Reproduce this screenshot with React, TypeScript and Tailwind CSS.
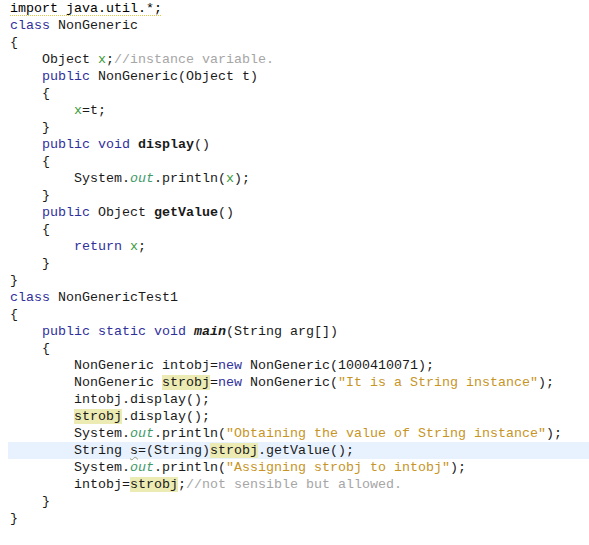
type Kind = "t" | "k" | "f" | "o" | "s" | "c" | "b" | "bi" | "h" | "w" | "u";
type Tok = [Kind, string];

const styles: Record<Kind, string> = {
  t: "text-[#1a1a1a]",
  k: "text-[#30309c]",
  f: "text-[#3a9a3a]",
  o: "text-[#3f9a6a] italic",
  s: "text-[#c79526]",
  c: "text-[#a6a6a6]",
  b: "text-[#1a1a1a] font-bold",
  bi: "text-[#1a1a1a] font-bold italic",
  h: "text-[#1a1a1a] bg-[#ecebb3]",
  w: "text-[#1a1a1a] underline decoration-wavy decoration-[#9a9a7a] decoration-1 underline-offset-2",
  u: "underline decoration-dotted decoration-[#e0c84a] decoration-1 underline-offset-[3px]",
};

const T = (s: string): Tok => ["t", s];
const K = (s: string): Tok => ["k", s];
const F = (s: string): Tok => ["f", s];
const O = (s: string): Tok => ["o", s];
const S = (s: string): Tok => ["s", s];
const C = (s: string): Tok => ["c", s];
const B = (s: string): Tok => ["b", s];
const H = (s: string): Tok => ["h", s];

const i1 = "    ";
const i2 = "        ";

// the code shown in the editor
const lines: Tok[][] = [
  [["u", "import"], ["u", " "], ["u", "java.util.*;"]],
  [K("class"), T(" NonGeneric")],
  [T("{")],
  [T(i1 + "Object "), F("x"), T(";"), C("//instance variable.")],
  [T(i1), K("public"), T(" NonGeneric(Object t)")],
  [T(i1 + "{")],
  [T(i2), F("x"), T("=t;")],
  [T(i1 + "}")],
  [T(i1), K("public"), T(" "), K("void"), T(" "), B("display"), T("()")],
  [T(i1 + "{")],
  [T(i2 + "System."), O("out"), T(".println("), F("x"), T(");")],
  [T(i1 + "}")],
  [T(i1), K("public"), T(" Object "), B("getValue"), T("()")],
  [T(i1 + "{")],
  [T(i2), K("return"), T(" "), F("x"), T(";")],
  [T(i1 + "}")],
  [T("}")],
  [K("class"), T(" NonGenericTest1")],
  [T("{")],
  [T(i1), K("public"), T(" "), K("static"), T(" "), K("void"), T(" "), ["bi", "main"], T("(String arg[])")],
  [T(i1 + "{")],
  [T(i2 + "NonGeneric intobj="), K("new"), T(" NonGeneric(1000410071);")],
  [T(i2 + "NonGeneric "), H("strobj"), T("="), K("new"), T(" NonGeneric("), S('"It is a String instance"'), T(");")],
  [T(i2 + "intobj.display();")],
  [T(i2), H("strobj"), T(".display();")],
  [T(i2 + "System."), O("out"), T(".println("), S('"Obtaining the value of String instance"'), T(");")],
  [T(i2 + "String "), ["w", "s"], T("=(String)"), H("strobj"), T(".getValue();")],
  [T(i2 + "System."), O("out"), T(".println("), S('"Assigning strobj to intobj"'), T(");")],
  [T(i2 + "intobj="), H("strobj"), T(";"), C("//not sensible but allowed.")],
  [T(i1 + "}")],
  [T("}")],
];

const CURRENT = 26;

export default function App() {
  return (
    <div className="w-[589px] h-[545px] bg-white overflow-hidden">
      <div
        className="pt-0 text-[13.33px] leading-[17px] whitespace-pre"
        style={{ fontFamily: '"Liberation Mono", "Courier New", monospace' }}
      >
        {lines.map((line, i) => (
          <div
            key={i}
            className={
              "h-[17px] ml-[8px] pl-[2px] " + (i === CURRENT ? "bg-[#e8f2fe]" : "")
            }
          >
            {line.map(([kind, text], j) => (
              <span key={j} className={styles[kind]}>
                {text}
              </span>
            ))}
          </div>
        ))}
      </div>
    </div>
  );
}
